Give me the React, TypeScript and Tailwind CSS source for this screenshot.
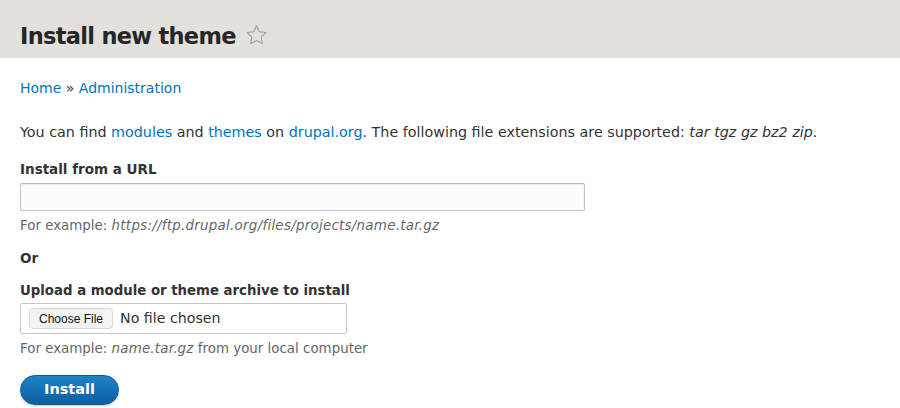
import React from 'react';

export default function App() {
  return (
    <div className="w-[900px] h-[408px] overflow-hidden bg-white text-[#333] font-['DejaVu_Sans',sans-serif]">
      {/* Page header */}
      <div className="h-[58px] bg-[#e2e1dc] flex items-start px-5 pt-[22px]">
        <h1 className="text-[22.5px] leading-[28px] font-bold text-[#262626] tracking-[-0.7px]">Install new theme</h1>
        <svg className="ml-[9px] mt-[2px] w-[23px] h-[23px]" viewBox="0 0 24 24" fill="none" stroke="#9a9a98" strokeWidth="1.1" strokeLinejoin="round">
          <path d="M12 1.8l3 6.3 6.8.8-5 4.8 1.3 6.8L12 17.3l-6.1 3.2 1.3-6.8-5-4.8 6.8-.8z" />
        </svg>
      </div>

      <div className="px-5">
        {/* Breadcrumb */}
        <div className="mt-[20px] text-[14px] leading-[20px]">
          <a className="text-[#0074bd]">Home</a>
          <span className="text-[#333]"> » </span>
          <a className="text-[#0074bd]">Administration</a>
        </div>

        <p className="mt-[24px] text-[14.3px] leading-[20px]">
          You can find <a className="text-[#0074bd]">modules</a> and <a className="text-[#0074bd]">themes</a> on{' '}
          <a className="text-[#0074bd]">drupal.org</a>. The following file extensions are supported:{' '}
          <em>tar tgz gz bz2 zip</em>.
        </p>

        {/* URL */}
        <div className="mt-[17px]">
          <label className="block text-[13.5px] font-bold leading-[20px]">Install from a URL</label>
          <div className="mt-[4px] w-[565px] h-[28px] border border-[#c4c4c2] border-t-[#b8b8b6] rounded-[2px] bg-[#fcfcfa] shadow-[inset_0_1px_2px_rgba(0,0,0,0.08)]" />
          <div className="mt-[5px] text-[13.4px] leading-[20px] text-[#666]">
            For example: <em className="tracking-[0.27px]">https://ftp.drupal.org/files/projects/name.tar.gz</em>
          </div>
        </div>

        <div className="mt-[12px] text-[13.5px] font-bold leading-[20px]">Or</div>

        {/* Upload */}
        <div className="mt-[13px]">
          <label className="block text-[13.3px] font-bold leading-[20px]">Upload a module or theme archive to install</label>
          <div className="mt-[2px] w-[327px] h-[31px] border border-[#c8c8c6] rounded-[2px] bg-white flex items-center px-[8px] gap-[7px]">
            <span className="h-[21px] px-[9px] flex items-center rounded-[4px] border border-[#d8d8d8] bg-[#f3f3f3] text-[12px] text-[#111] font-['Liberation_Sans',sans-serif]">
              Choose File
            </span>
            <span className="text-[14.2px] text-[#333]">No file chosen</span>
          </div>
          <div className="mt-[5px] text-[13.4px] leading-[20px] text-[#666]">
            For example: <em className="tracking-[0.2px]">name.tar.gz</em> from your local computer
          </div>
        </div>

        <button className="mt-[16px] w-[99px] h-[30px] rounded-full bg-gradient-to-b from-[#1d83c8] to-[#0b5f9f] border border-[#0a5a96] text-white text-[14.5px] font-bold shadow-[0_1px_2px_rgba(0,0,0,0.2)]">
          Install
        </button>
      </div>
    </div>
  );
}
